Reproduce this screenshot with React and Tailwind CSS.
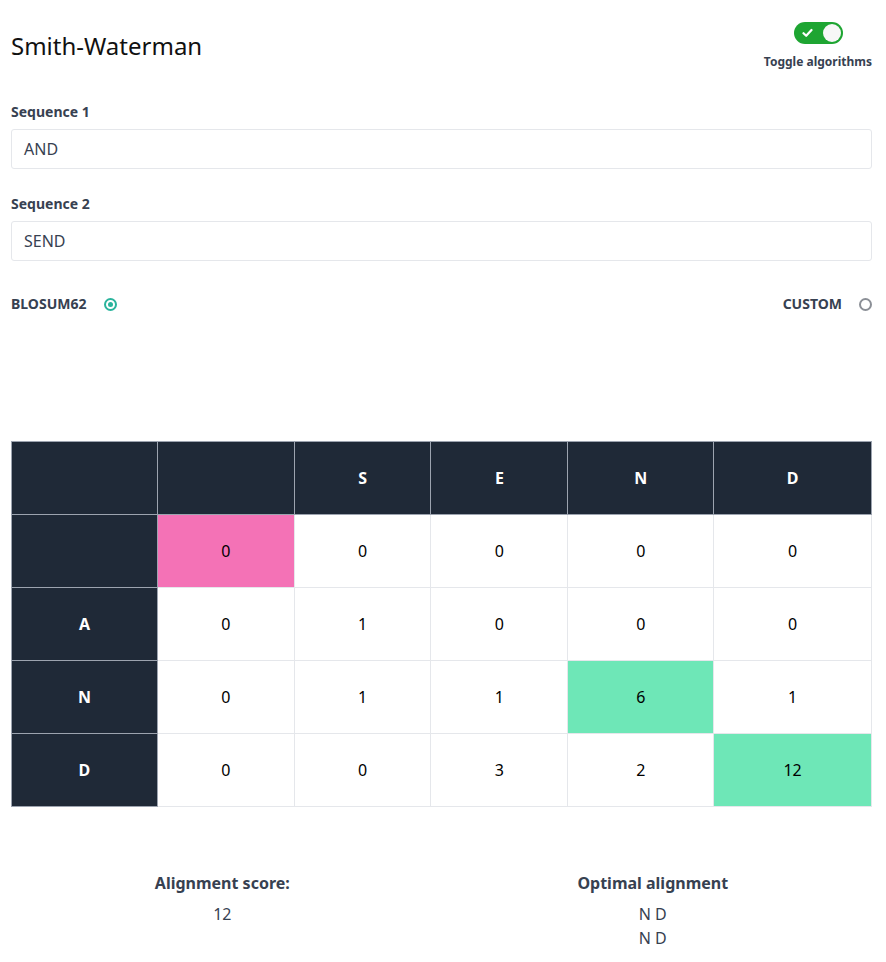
import React from "react";

const cols = ["", "S", "E", "N", "D"];
const widths = ["w-[146px]", "w-[137px]", "w-[137px]", "w-[137px]", "w-[146px]", "w-[158px]"];
const rows = [
  { label: "", vals: [0, 0, 0, 0, 0] },
  { label: "A", vals: [0, 1, 0, 0, 0] },
  { label: "N", vals: [0, 1, 1, 6, 1] },
  { label: "D", vals: [0, 0, 3, 2, 12] },
];
const highlight = { "0-0": "bg-[#f472b6]", "2-3": "bg-[#6ee7b7]", "3-4": "bg-[#6ee7b7]" };

export default function App() {
  return (
    <div className="min-h-[962px] bg-white pl-[11px] pr-[14px] pt-[22px] text-[#374151]" style={{ fontFamily: '"Noto Sans", "Open Sans", sans-serif' }}>
      <div className="flex items-start justify-between">
        <h1 className="mt-[8px] text-[24px] leading-[32px] text-[#111]">Smith-Waterman</h1>
        <div className="flex flex-col items-center">
          <div className="relative ml-[2px] h-[22px] w-[49px] rounded-full bg-[#1ea532]">
            <svg className="absolute left-[8px] top-[6px]" width="11" height="10" viewBox="0 0 11 10">
              <path d="M1.5 5.2 L4.2 7.8 L9.5 2" stroke="white" strokeWidth="2.2" fill="none" strokeLinecap="round" strokeLinejoin="round" />
            </svg>
            <div className="absolute right-[2px] top-[2px] h-[18px] w-[18px] rounded-full bg-[#f7f7f7]" />
          </div>
          <div className="mt-[10px] text-[12px] font-bold leading-[16px] text-[#374151]">Toggle algorithms</div>
        </div>
      </div>

      <div className="mt-[32px]">
        <label className="block text-[14px] font-bold leading-[20px]">Sequence 1</label>
        <div className="mt-[7px] flex h-[40px] items-center rounded-[3px] border border-[#e5e7eb] px-[12px] text-[16px] text-[#374151]">AND</div>
      </div>
      <div className="mt-[25px]">
        <label className="block text-[14px] font-bold leading-[20px]">Sequence 2</label>
        <div className="mt-[7px] flex h-[40px] items-center rounded-[3px] border border-[#e5e7eb] px-[12px] text-[16px] text-[#374151]">SEND</div>
      </div>

      <div className="mt-[33px] flex items-center justify-between">
        <div className="flex items-center gap-[18px]">
          <span className="text-[14px] font-bold leading-[20px] uppercase">BLOSUM62</span>
          <span className="flex h-[13px] w-[13px] items-center justify-center rounded-full border-2 border-[#2ab49c]">
            <span className="h-[5px] w-[5px] rounded-full bg-[#2ab49c]" />
          </span>
        </div>
        <div className="flex items-center gap-[17px]">
          <span className="text-[14px] font-bold leading-[20px] uppercase">CUSTOM</span>
          <span className="h-[13px] w-[13px] rounded-full border-2 border-[#8b8f96]" />
        </div>
      </div>

      <table className="mt-[127px] w-[861px] border-collapse text-[16px]">
        <thead>
          <tr>
            <th className={`${widths[0]} h-[73px] border border-[#9ca3af] bg-[#1f2937]`} />
            {cols.map((c, i) => (
              <th key={i} className={`${widths[i + 1]} h-[73px] border border-[#9ca3af] bg-[#1f2937] font-bold text-white`}>{c}</th>
            ))}
          </tr>
        </thead>
        <tbody>
          {rows.map((r, ri) => (
            <tr key={ri}>
              <th className="h-[73px] border border-[#9ca3af] bg-[#1f2937] font-bold text-white">{r.label}</th>
              {r.vals.map((v, ci) => (
                <td key={ci} className={`h-[73px] border border-[#e5e7eb] text-center text-black ${highlight[`${ri}-${ci}`] || "bg-white"}`}>{v}</td>
              ))}
            </tr>
          ))}
        </tbody>
      </table>

      <div className="mt-[64px] flex justify-around text-[16px] leading-[24px]">
        <div className="flex flex-col items-center">
          <div className="font-bold">Alignment score:</div>
          <div className="mt-[7px]">12</div>
        </div>
        <div className="flex flex-col items-center">
          <div className="font-bold">Optimal alignment</div>
          <div className="mt-[7px]">N D</div>
          <div>N D</div>
        </div>
      </div>
    </div>
  );
}
